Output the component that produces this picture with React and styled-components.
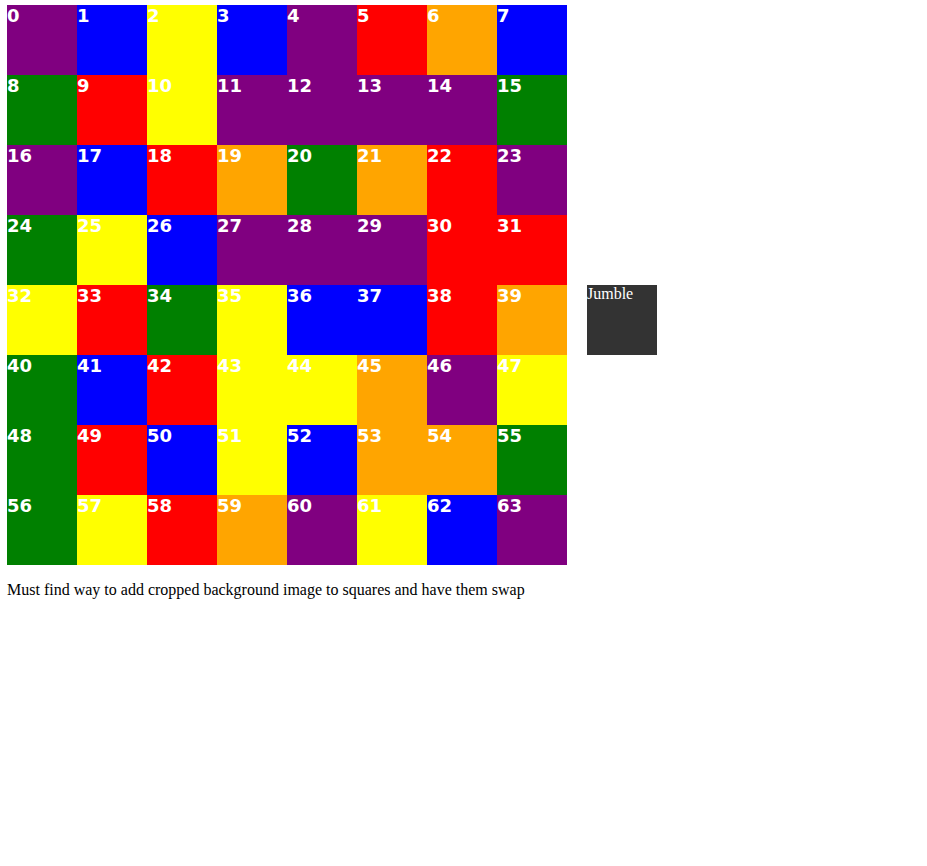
import React from "react";
import styled, { createGlobalStyle } from "styled-components";

const GlobalStyle = createGlobalStyle`
  body {
    margin: 0;
    font-family: "Liberation Serif", "Times New Roman", serif;
    background: white;
  }
`;

const colors = {
  p: "#800080",
  b: "#0000ff",
  y: "#ffff00",
  r: "#ff0000",
  o: "#ffa500",
  g: "#008000",
};

const layout = [
  "p b y b p r o b",
  "g r y p p p p g",
  "p b r o g o r p",
  "g y b p p p r r",
  "y r g y b b r o",
  "g b r y y o p y",
  "g r b y b o o g",
  "g y r o p y b p",
]
  .join(" ")
  .split(" ");

function App() {
  return (
    <>
      <GlobalStyle />
      <Page>
        <Top>
          <Board>
            {layout.map((c, i) => (
              <Square key={i} color={colors[c]}>
                {i}
              </Square>
            ))}
          </Board>
          <JumbleButton>Jumble</JumbleButton>
        </Top>
        <Note>
          Must find way to add cropped background image to squares and have them swap
        </Note>
      </Page>
    </>
  );
}

export default App;

const Page = styled.div`
  padding: 5px 7px 0;
`;

const Top = styled.div`
  display: flex;
  align-items: flex-start;
  gap: 20px;
`;

const Board = styled.div`
  display: grid;
  grid-template-columns: repeat(8, 70px);
  grid-auto-rows: 70px;
`;

const Square = styled.div`
  background: ${(props) => props.color};
  color: white;
  font-family: "DejaVu Sans", Verdana, sans-serif;
  font-weight: bold;
  font-size: 18px;
`;

const JumbleButton = styled.div`
  width: 70px;
  height: 70px;
  margin-top: 280px;
  background: #333333;
  color: white;
  font-size: 16px;
  cursor: pointer;
`;

const Note = styled.p`
  margin: 16px 0;
  font-size: 16px;
`;
